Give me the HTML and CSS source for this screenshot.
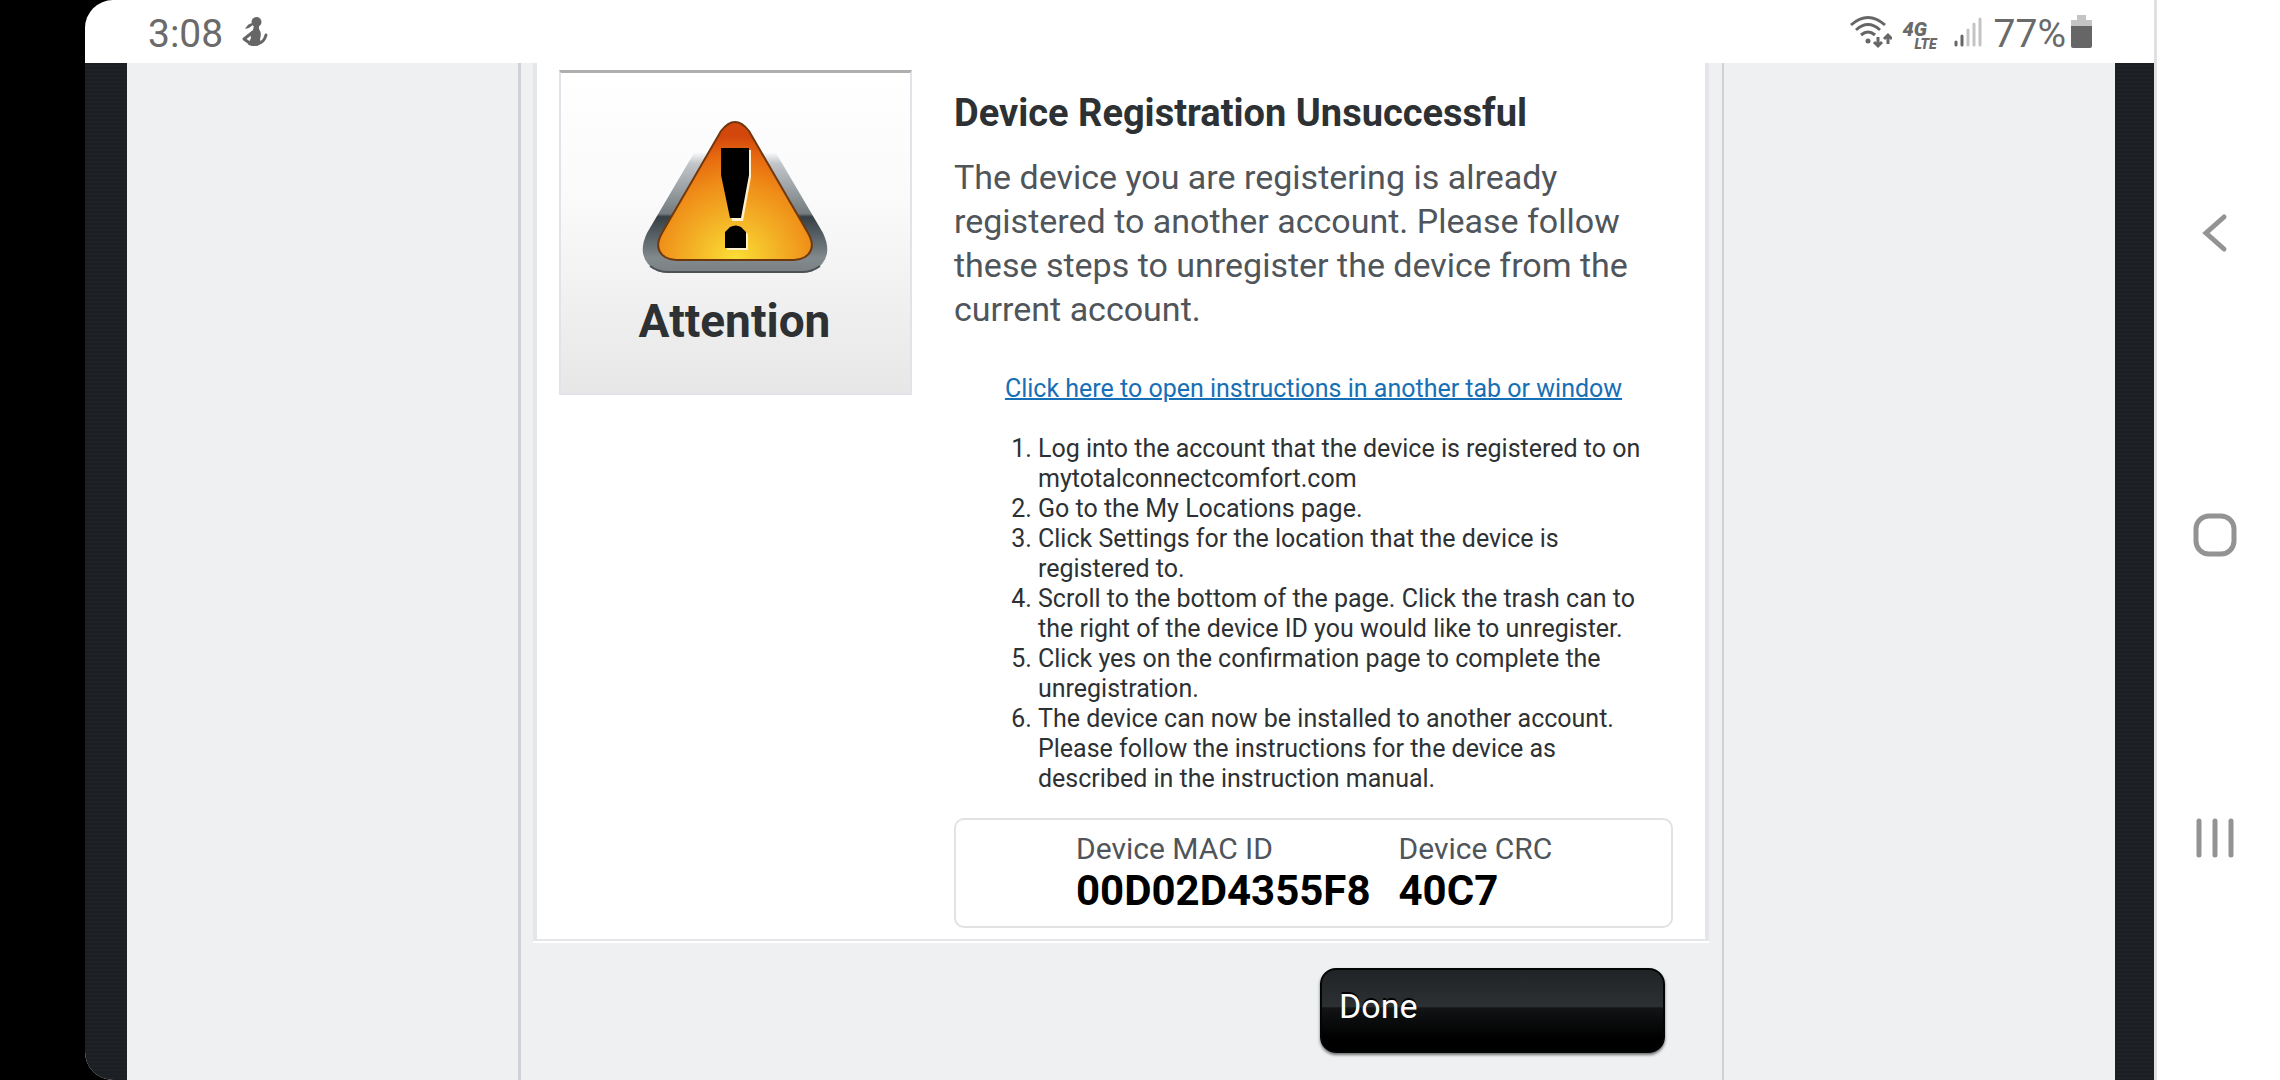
FILE: index.html
```html
<!DOCTYPE html>
<html lang="en">
<head>
<meta charset="utf-8">
<title>Device Registration</title>
<link rel="stylesheet" href="styles.css">
</head>
<body>
<div class="screen">
  <header class="status">
    <span class="clock">3:08</span>
    <svg class="person" width="28" height="32" viewBox="0 0 28 32" aria-hidden="true">
      <circle cx="15.500" cy="6" r="5" fill="#666"/>
      <path d="M12 7Q7 7 4 13Q9 12 12 9ZM13 9H18V13Q21 17 19 23Q21 30 14 30Q8 30 7 28L10 22L9 17L12 14Z" fill="#666"/>
      <path d="M12 16L3 23L10 28" fill="none" stroke="#666" stroke-width="3" stroke-linejoin="round"/>
      <path d="M16 28Q23 27 25 19" fill="none" stroke="#666" stroke-width="3" stroke-linecap="round"/>
    </svg>
    <span class="spacer"></span>
    <svg width="42" height="34" viewBox="0 0 42 34" aria-hidden="true">
      <g fill="none" stroke="#666" stroke-width="3">
        <path d="M1 10Q18 -5 35 10M6 15Q18 4 30 15M11 20Q18 14 25 20"/>
        <path d="M28 22V31M24 27L28 31L32 27M38 29V20M34 24L38 20L42 24"/>
      </g>
      <circle cx="18" cy="26" r="2.500" fill="#666"/>
    </svg>
    <span class="network"><b>4G</b><b class="lte">LTE</b></span>
    <svg class="signal" width="28" height="30" viewBox="0 0 28 30" aria-hidden="true">
      <path d="M2 25V28M8 19V28" stroke="#666" stroke-width="3" stroke-linecap="round"/>
      <path d="M14 13V28M20 7V28M26 2V28" stroke="#c4c4c4" stroke-width="3" stroke-linecap="round"/>
    </svg>
    <span class="percent">77%</span>
    <svg class="battery" width="21" height="33" viewBox="0 0 21 33" aria-hidden="true">
      <path d="M6 0H15V5H21V12H0V5H6Z" fill="#c4c4c4"/>
      <path d="M0 11H21V31Q21 33 19 33H2Q0 33 0 31Z" fill="#666"/>
    </svg>
  </header>
  <div class="backdrop">
    <div class="page">
      <main class="panel">
        <section class="sheet">
          <aside class="notice">
            <svg width="186" height="154" viewBox="0 0 186 154" aria-hidden="true">
              <defs>
                <linearGradient id="rim" gradientUnits="userSpaceOnUse" x1="0" y1="0" x2="0" y2="152">
                  <stop offset=".2" stop-color="#fff"/><stop offset=".28" stop-color="#c2c6c9"/>
                  <stop offset=".61" stop-color="#747c80"/><stop offset=".63" stop-color="#363f43"/><stop offset=".83" stop-color="#6b7478"/><stop offset=".9" stop-color="#838a8d"/><stop offset="1" stop-color="#7a8184"/>
                </linearGradient>
                <radialGradient id="glow" gradientUnits="userSpaceOnUse" cx="93" cy="140" r="136">
                  <stop offset="0" stop-color="#fbe035"/><stop offset=".3" stop-color="#f4b527"/><stop offset=".58" stop-color="#ef8d18"/><stop offset=".78" stop-color="#e7690f"/><stop offset=".92" stop-color="#d3470d"/>
                </radialGradient>
              </defs>
              <path d="M52 32H134L181 112Q190 131 180 143Q172 152 160 152H26Q14 152 6 143Q-4 131 5 112Z" fill="url(#rim)"/>
              <path d="M8 145Q16 151 26 151H160Q170 151 178 145" fill="none" stroke="#4c5153" stroke-width="2"/>
              <path d="M79 10Q93 -8 107 10L166 112Q175 128 163 136Q158 139 152 139H34Q28 139 23 136Q11 128 20 112Z" fill="url(#glow)" stroke="#70380d" stroke-width="2"/>
              <path d="M81 29H109V56L101 100H90L82 56ZM85 113Q94 102 106 113V129H85Z" fill="#fff0ce"/>
              <path d="M79 27H107V54L99 97H88L79 54ZM83 111L88 106Q94 103 99 106L104 111V127H83Z" fill="#000"/>
            </svg>
            <h2 class="notice-title">Attention</h2>
          </aside>
          <div class="content">
            <h1 class="title">Device Registration Unsuccessful</h1>
            <p class="lead">The device you are registering is already registered to another account. Please follow these steps to unregister the device from the current account.</p>
            <p class="help"><a href="#instructions">Click here to open instructions in another tab or window</a></p>
            <ol class="steps" id="instructions">
              <li>Log into the account that the device is registered to on mytotalconnectcomfort.com</li>
              <li>Go to the My Locations page.</li>
              <li>Click Settings for the location that the device is registered to.</li>
              <li>Scroll to the bottom of the page. Click the trash can to the right of the device ID you would like to unregister.</li>
              <li>Click yes on the confirmation page to complete the unregistration.</li>
              <li>The device can now be installed to another account. Please follow the instructions for the device as described in the instruction manual.</li>
            </ol>
            <dl class="device">
              <div><dt>Device MAC ID</dt><dd>00D02D4355F8</dd></div>
              <div><dt>Device CRC</dt><dd>40C7</dd></div>
            </dl>
          </div>
        </section>
        <div class="actions"><button class="done" type="button">Done</button></div>
      </main>
    </div>
  </div>
</div>
<nav class="navbar">
  <button type="button" aria-label="Back"><svg width="46" height="46" viewBox="0 0 46 46" fill="none" stroke="#939393" stroke-width="5" stroke-linecap="round"><path d="M32 7L14 23L32 39"/></svg></button>
  <button type="button" aria-label="Home"><svg width="46" height="46" viewBox="0 0 46 46" fill="none" stroke="#939393" stroke-width="5"><rect x="4" y="4" width="38" height="38" rx="13"/></svg></button>
  <button type="button" aria-label="Recents"><svg width="46" height="46" viewBox="0 0 46 46" fill="none" stroke="#939393" stroke-width="5" stroke-linecap="round"><path d="M7 6V40M23 6V40M39 6V40"/></svg></button>
</nav>
</body>
</html>
```
FILE: styles.css
```css
* { box-sizing: border-box; }
body {
  margin: 0;
  min-height: 100vh;
  padding-left: 85px;
  display: flex;
  background: #000;
  color: #2d3134;
  font-family: Roboto, "Liberation Sans", sans-serif;
}
h1, h2, p, ol, dl, dd { margin: 0; }
button { font: inherit; border: 0; cursor: pointer; }

.screen {
  flex: 1;
  display: flex;
  flex-direction: column;
  overflow: hidden;
  background: #fff;
  border-radius: 28px 0 0 28px;
}
.status {
  height: 63px;
  padding: 0 62px 0 63px;
  display: flex;
  align-items: center;
  color: #6a6a6a;
}
.clock, .percent { font-size: 39px; line-height: 64px; font-weight: 400; }
.clock { margin-top: 4px; }
.percent { margin: 4px 5px 0 12px; }
.person { margin-left: 18px; }
.spacer { flex: 1; }
.network {
  width: 34px;
  margin: 8px 17px 0 11px;
  display: flex;
  flex-direction: column;
  font: italic 900 20px/16px Roboto, sans-serif;
}
.lte { align-self: flex-end; font-size: 14px; line-height: 14px; }

.backdrop {
  flex: 1;
  display: flex;
  padding: 0 39px 0 42px;
  background: repeating-linear-gradient(#1b1f24 0 2px, #1e2227 2px 4px);
}
.page {
  flex: 1;
  display: flex;
  justify-content: center;
  background: #eff0f2;
}
.panel {
  width: 1206px;
  max-width: 100%;
  padding: 0 13px 0 12px;
  border-left: 3px solid #cfd1d7;
  border-right: 2px solid #cfd1d7;
}
.sheet {
  display: grid;
  grid-template-columns: 353px minmax(0, 1fr);
  gap: 42px;
  align-items: start;
  padding: 7px 32px 11px 22px;
  background: #fff;
  border: solid #e4e6e9;
  border-width: 0 4px 2px 4px;
  box-shadow: 0 2px #fff;
}
.notice {
  height: 325px;
  padding: 48px 2px 0 0;
  display: flex;
  flex-direction: column;
  align-items: center;
  background: linear-gradient(#fff, #fafafa 40%, #e7e7e7);
  border: 2px solid #e2e3e8;
  border-top: 3px solid #adb0ae;
}
.notice-title { margin-top: 18px; font-size: 46px; line-height: 56px; font-weight: 700; }
.title { padding-top: 20px; font-size: 38px; line-height: 46px; font-weight: 700; }
.lead { margin-top: 19px; font-size: 34px; line-height: 44px; color: #4f555a; }
.help { margin-top: 43px; text-align: center; font-size: 25px; line-height: 30px; }
.help a { color: #176fb5; text-decoration-thickness: 2px; }
.steps { margin-top: 30px; padding: 0 10px 0 84px; font-size: 25px; line-height: 30px; }
.device {
  margin-top: 24px;
  height: 110px;
  padding: 12px 20px 0 120px;
  display: flex;
  gap: 28px;
  white-space: nowrap;
  border: 2px solid #e1e2e3;
  border-radius: 10px;
}
.device dt { font-size: 30px; line-height: 34px; color: #4f555a; }
.device dd { font-size: 42px; line-height: 50px; font-weight: 700; color: #000; }
.actions {
  display: flex;
  justify-content: flex-end;
  padding: 27px 44px 27px 0;
}
.done {
  width: 345px;
  height: 85px;
  padding: 0 17px 10px;
  text-align: left;
  font-size: 34px;
  color: #fff;
  text-shadow: 0 -2px #000;
  background: linear-gradient(#202426, #2c3032 45%, #121415 47%, #000 85%);
  border: 2px solid #030404;
  border-radius: 16px;
  box-shadow: 0 2px 3px #0008;
}
.navbar {
  width: 126px;
  padding: 82px 7px 91px 0;
  display: flex;
  flex-direction: column;
  justify-content: space-around;
  align-items: center;
  background: #fff;
  border-left: 3px solid #e0e0e3;
}
.navbar button { padding: 0; background: none; line-height: 0; }
```
